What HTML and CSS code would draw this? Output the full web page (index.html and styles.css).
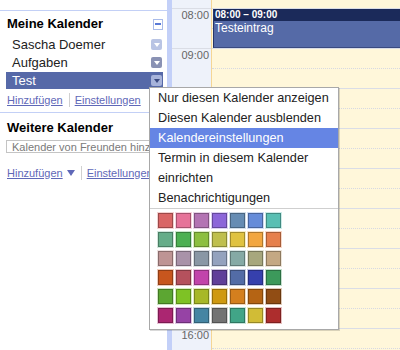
FILE: index.html
```html
<!DOCTYPE html>
<html lang="de">
<head>
  <meta charset="UTF-8">
  <title>Kalender</title>
  <link rel="stylesheet" href="styles.css">
</head>
<body>
  <div class="app">
    <!-- Sidebar -->
    <div class="sidebar">
      <div class="section">
        <div class="section-head">
          <span>Meine Kalender</span>
          <span class="collapse"></span>
        </div>
        <ul class="cal-list">
          <li class="cal">Sascha Doemer<span class="dd dd-light"></span></li>
          <li class="cal">Aufgaben<span class="dd dd-gray"></span></li>
          <li class="cal selected">Test<span class="dd dd-active"></span></li>
        </ul>
        <div class="links">
          <a href="#">Hinzufügen</a><span class="sep"></span><a href="#">Einstellungen</a>
        </div>
      </div>

      <div class="section">
        <div class="section-head other-head">
          <span>Weitere Kalender</span>
        </div>
        <input class="friend-input" type="text" placeholder="Kalender von Freunden hinzufügen">
        <div class="links links-other">
          <a href="#">Hinzufügen</a><span class="down"></span><span class="sep"></span><a href="#">Einstellungen</a>
        </div>
      </div>
    </div>

    <div class="divider"></div>

    <!-- Hour labels -->
    <div class="times">
      <div class="hour">08:00</div>
      <div class="hour">09:00</div>
      <div class="hour">10:00</div>
      <div class="hour">11:00</div>
      <div class="hour">12:00</div>
      <div class="hour">13:00</div>
      <div class="hour">14:00</div>
      <div class="hour">15:00</div>
      <div class="hour">16:00</div>
    </div>

    <!-- Day column -->
    <div class="day">
      <div class="slot"><div class="half"></div></div>
      <div class="slot"><div class="half"></div></div>
      <div class="slot"><div class="half"></div></div>
      <div class="slot"><div class="half"></div></div>
      <div class="slot"><div class="half"></div></div>
      <div class="slot"><div class="half"></div></div>
      <div class="slot"><div class="half"></div></div>
      <div class="slot"><div class="half"></div></div>
      <div class="slot"><div class="half"></div></div>

      <div class="event">
        <div class="event-head">08:00 – 09:00</div>
        <div class="event-body">Testeintrag</div>
      </div>
    </div>
  </div>

  <!-- Calendar context menu -->
  <div class="menu">
    <div class="menu-item">Nur diesen Kalender anzeigen</div>
    <div class="menu-item">Diesen Kalender ausblenden</div>
    <div class="menu-item active">Kalendereinstellungen</div>
    <div class="menu-item">Termin in diesem Kalender</div>
    <div class="menu-item">einrichten</div>
    <div class="menu-item">Benachrichtigungen</div>
    <div class="swatches">
      <span class="swatch" style="--c:#d96666"></span>
      <span class="swatch" style="--c:#e67399"></span>
      <span class="swatch" style="--c:#b373b3"></span>
      <span class="swatch" style="--c:#8c66d9"></span>
      <span class="swatch" style="--c:#668cb3"></span>
      <span class="swatch" style="--c:#668cd9"></span>
      <span class="swatch" style="--c:#59bfb3"></span>

      <span class="swatch" style="--c:#65ad89"></span>
      <span class="swatch" style="--c:#4cb052"></span>
      <span class="swatch" style="--c:#8cbf40"></span>
      <span class="swatch" style="--c:#bfbf4d"></span>
      <span class="swatch" style="--c:#e0c240"></span>
      <span class="swatch" style="--c:#f2a640"></span>
      <span class="swatch" style="--c:#e6804d"></span>

      <span class="swatch" style="--c:#be9494"></span>
      <span class="swatch" style="--c:#a992a9"></span>
      <span class="swatch" style="--c:#8997a5"></span>
      <span class="swatch" style="--c:#94a2be"></span>
      <span class="swatch" style="--c:#85aaa5"></span>
      <span class="swatch" style="--c:#a7a77d"></span>
      <span class="swatch" style="--c:#c4a883"></span>

      <span class="swatch" style="--c:#c7561e"></span>
      <span class="swatch" style="--c:#b5515d"></span>
      <span class="swatch" style="--c:#c244ab"></span>
      <span class="swatch" style="--c:#603f99"></span>
      <span class="swatch" style="--c:#536ca6"></span>
      <span class="swatch" style="--c:#3640ad"></span>
      <span class="swatch" style="--c:#3c995b"></span>

      <span class="swatch" style="--c:#5ca632"></span>
      <span class="swatch" style="--c:#7ec225"></span>
      <span class="swatch" style="--c:#a7b828"></span>
      <span class="swatch" style="--c:#cf9911"></span>
      <span class="swatch" style="--c:#d47f1e"></span>
      <span class="swatch" style="--c:#b56414"></span>
      <span class="swatch" style="--c:#914d14"></span>

      <span class="swatch" style="--c:#ab2671"></span>
      <span class="swatch" style="--c:#9643a5"></span>
      <span class="swatch" style="--c:#4585a3"></span>
      <span class="swatch" style="--c:#737373"></span>
      <span class="swatch" style="--c:#41a587"></span>
      <span class="swatch" style="--c:#d1bc36"></span>
      <span class="swatch" style="--c:#ad2d2d"></span>
    </div>
  </div>
</body>
</html>
```

FILE: styles.css
```css
/* Base */
* {
  box-sizing: border-box;
}

body {
  margin: 0;
  font-family: "Liberation Sans", Arial, sans-serif;
  font-size: 13px;
  color: #222;
  background: #fff;
  overflow: hidden;
}

.app {
  display: flex;
  height: 350px;
}

/* Sidebar */
.sidebar {
  width: 167px;
  flex-shrink: 0;
  padding-top: 10px;
}

.section {
  border-top: 1px solid #c3d0f6;
}

.section-head {
  display: flex;
  justify-content: space-between;
  align-items: center;
  padding: 5px 4px 3px 7px;
  font-weight: bold;
  line-height: 16px;
  color: #000;
}

.other-head {
  padding: 7px 4px 4px 7px;
}

.collapse {
  width: 10px;
  height: 11px;
  border: 1px solid #a9bbe9;
  display: flex;
  align-items: center;
  justify-content: center;
}

.collapse::before {
  content: "";
  width: 6px;
  height: 2px;
  background: #5b7bd6;
}

.cal-list {
  list-style: none;
  margin: 0 4px 0 6px;
  padding: 0;
}

.cal {
  display: flex;
  justify-content: space-between;
  align-items: center;
  height: 17px;
  margin-top: 1px;
  padding: 0 1px 0 6px;
}

.cal.selected {
  background: #5669a8;
  color: #fff;
}

.dd {
  width: 11px;
  height: 11px;
  border-radius: 2px;
  display: flex;
  align-items: center;
  justify-content: center;
}

.dd::before {
  content: "";
  border-left: 3px solid transparent;
  border-right: 3px solid transparent;
  border-top: 4px solid #fff;
}

.dd-light { background: #b9c4e4; }
.dd-gray { background: #8a92b4; }
.dd-active { background: #a7b3da; }
.dd-active::before { border-top-color: #3b4a80; }

.links {
  display: flex;
  align-items: center;
  padding: 4px 0 5px 7px;
  font-size: 11px;
  line-height: 13px;
  white-space: nowrap;
}

.links a {
  color: #5f68b8;
}

.sep {
  width: 1px;
  height: 14px;
  background: #d0d0d0;
  margin: 0 5px 0 6px;
}

.links-other {
  padding-top: 13px;
}

.down {
  margin-left: 4px;
  border-left: 4px solid transparent;
  border-right: 4px solid transparent;
  border-top: 6px solid #5f68b8;
}

.links-other .sep {
  margin-left: 6px;
}

.friend-input {
  display: block;
  width: 152px;
  height: 13px;
  margin: 0 0 0 6px;
  padding: 0 5px;
  border: 1px solid #c4c4c4;
  font-family: inherit;
  font-size: 11px;
  line-height: 11px;
  color: #777;
}

.friend-input::placeholder {
  color: #7a7a7a;
}

.divider {
  width: 5px;
  flex-shrink: 0;
  background: #c3d0f8;
}

/* Hour labels */
.times {
  width: 39px;
  flex-shrink: 0;
  padding-top: 8px;
  background: #eef2fa;
}

.hour {
  height: 40px;
  border-top: 1px solid #dadde5;
  padding-right: 2px;
  text-align: right;
  font-size: 11px;
  line-height: 13px;
  color: #666;
}

/* Day column */
.day {
  position: relative;
  flex: 1;
  padding-top: 8px;
  background: #fff7da;
  border-left: 1px solid #f5d695;
}

.slot {
  height: 40px;
  border-top: 1px solid #dadde6;
}

.half {
  height: 20px;
  border-bottom: 1px dotted #d6d9e2;
}

.event {
  position: absolute;
  top: 9px;
  left: 1px;
  right: 0;
  height: 39px;
  border-left: 1px solid #26356a;
  border-bottom: 1px solid #3a4a80;
  color: #fff;
}

.event-head {
  height: 12px;
  padding-left: 1px;
  background: #1b2a5a;
  font-size: 10px;
  font-weight: bold;
  line-height: 12px;
}

.event-body {
  height: 26px;
  padding-left: 1px;
  background: #556aa7;
  font-size: 12px;
  line-height: 14px;
}

/* Context menu */
.menu {
  position: absolute;
  top: 87px;
  left: 149px;
  width: 190px;
  background: #fff;
  border: 1px solid #a8a8a8;
  box-shadow: 1px 1px 0 rgba(0, 0, 0, 0.15);
}

.menu-item {
  padding: 0 8px;
  line-height: 20px;
  font-size: 12.7px;
  color: #222;
  white-space: nowrap;
}

.menu-item.active {
  background: #6585e4;
  color: #fff;
}

.swatches {
  display: grid;
  grid-template-columns: repeat(7, 15px);
  gap: 4px 3px;
  padding: 4px 0 6px 8px;
  border-top: 1px solid #cfcfcf;
}

.swatch {
  width: 15px;
  height: 15px;
  background: var(--c);
  border: 1px solid color-mix(in srgb, var(--c) 72%, #000);
  box-shadow: 0 0 0 1px color-mix(in srgb, var(--c) 30%, #fff);
}
```
